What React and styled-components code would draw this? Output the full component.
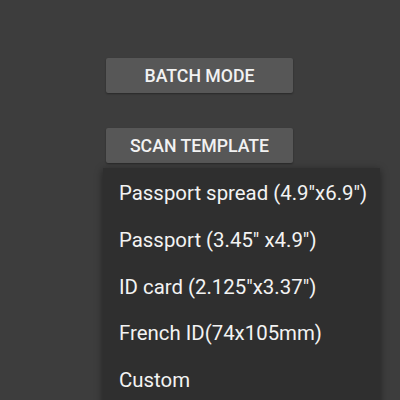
import React from "react";
import styled, { createGlobalStyle } from "styled-components";

const Global = createGlobalStyle`
  html, body { margin: 0; padding: 0; background: #3d3d3d; }
  body { font-family: Roboto, "Noto Sans", sans-serif; overflow: hidden; }
`;

const Page = styled.div`
  width: 400px;
  height: 400px;
  background: #3d3d3d;
  display: flex;
  flex-direction: column;
  padding-top: 58px;
  box-sizing: border-box;
  position: relative;
  overflow: hidden;
`;

const Button = styled.button`
  margin-left: 106px;
  width: 187px;
  height: 35px;
  background: #575757;
  border: none;
  border-radius: 2px;
  box-shadow: 0 1px 2px rgba(0, 0, 0, 0.35);
  color: #f2f2f2;
  font-family: Roboto, sans-serif;
  font-weight: 500;
  font-size: 17.7px;
  padding: 0;
  margin-bottom: ${(p) => p.$gap || 0}px;
`;

const Menu = styled.ul`
  position: absolute;
  left: 103px;
  top: 168px;
  width: 277px;
  height: 260px;
  margin: 0;
  padding: 0;
  list-style: none;
  background: #2f2f2f;
  box-shadow: 0 2px 8px rgba(0, 0, 0, 0.45);
  display: flex;
  flex-direction: column;
  padding-top: 2px;
`;

const Item = styled.li`
  height: 46.7px;
  flex-shrink: 0;
  display: flex;
  align-items: center;
  padding-left: 16px;
  color: #f3f3f3;
  font-size: 20.4px;
  font-family: Roboto, sans-serif;
`;

const items = [
  'Passport spread (4.9"x6.9")',
  'Passport (3.45" x4.9")',
  'ID card (2.125"x3.37")',
  "French ID(74x105mm)",
  "Custom",
];

export default function App() {
  return (
    <Page>
      <Global />
      <Button $gap={35}>BATCH MODE</Button>
      <Button>SCAN TEMPLATE</Button>
      <Menu>
        {items.map((t) => (
          <Item key={t}>{t}</Item>
        ))}
      </Menu>
    </Page>
  );
}
